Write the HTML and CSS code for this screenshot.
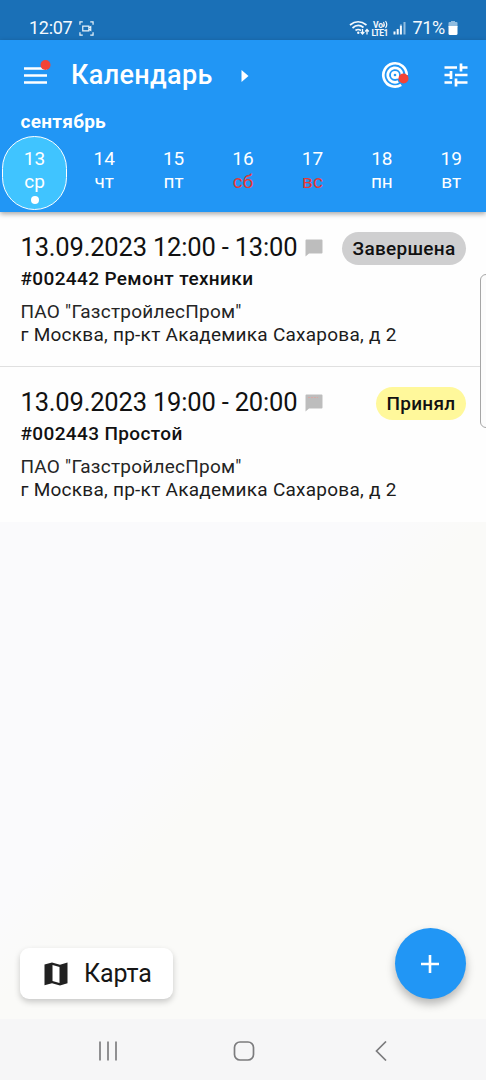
FILE: index.html
```html
<!DOCTYPE html>
<html lang="ru">
<head>
<meta charset="utf-8">
<title>Календарь</title>
<link rel="stylesheet" href="styles.css">
</head>
<body>
<div class="app">
  <div class="status">
    <span class="clock">12:07</span>
    <svg class="rec" width="15" height="15" viewBox="0 0 16 16" fill="none" stroke="#e8f2fa" stroke-width="1.3"><path d="M1 4V1h3M12 1h3v3M15 12v3h-3M4 15H1v-3M4 5.500h6.500v5H4zM10.500 7.500l2-1.500v4l-2-1.500"/></svg>
    <svg class="signals" width="58" height="18" viewBox="0 0 58 18" fill="none" stroke="#f4f9fd" stroke-width="1.700">
      <path d="M1 6Q9 -.5 17.500 6M3.500 9Q9 4 14.500 8.500M6.500 11.500Q9 9.500 12 11.500"/>
      <circle cx="9.300" cy="13.800" r="1.200" fill="#f4f9fd" stroke="none"/>
      <path stroke-width="1.300" d="M13.500 10v5M11.700 13l1.800 2 1.800-2M18 15.500v-5M16.200 12.500l1.800-2 1.800 2"/>
      <path d="M45.500 15.500v-3M48.700 15.500V10M51.900 15.500V7" stroke-width="2"/><path d="M55.500 15.500V3M51.900 7V5.500" stroke="#8fbce0" stroke-width="2"/>
      <path d="M34.500 3q1.500 2.500 0 5M36.500 2q2.500 3.500 0 7" stroke-width="1.200"/>
      <g class="lte"><text x="24" y="8.500" textLength="10">Vo</text><text x="22.500" y="16.500" textLength="17">LTE1</text></g>
    </svg>
    <span class="percent">71%</span>
    <svg class="battery" width="10" height="16" viewBox="0 0 10 16"><path fill="#8fbce0" d="M3 1h4v1h1.500q1 0 1 1v4h-9V3q0-1 1-1H3z"/><path fill="#fff" d="M.5 6h9v7.500q0 1.500-1.500 1.500H2Q.5 15 .5 13.500z"/></svg>
  </div>
  <header class="header">
    <div class="bar">
      <svg class="menu" width="30" height="30" viewBox="0 0 30 30"><path stroke="#fff" stroke-width="2.600" d="M2 9.500h23M2 16.500h23M2 23.500h23"/><circle cx="23.500" cy="6" r="5" fill="#f44336"/></svg>
      <h1 class="title">Календарь</h1>
      <svg class="caret" width="8" height="14" viewBox="0 0 8 14"><path fill="#fff" d="M.5 1 7.500 7 .5 13z"/></svg>
      <svg class="radar" width="28" height="28" viewBox="0 0 28 28" fill="none" stroke="#fff" stroke-width="2.700"><path d="M25.700 14a11.700 11.700 0 1 0-5.500 9.900M21.200 14a7.200 7.200 0 1 0-4 6.500M14 14l4 3"/><circle cx="14" cy="14" r="2.700" fill="#fff"/><circle cx="14" cy="14" r="1.300" fill="#2196f5" stroke="none"/><circle cx="22.500" cy="17.500" r="5" fill="#f44336" stroke="none"/></svg>
      <svg class="tune" width="26" height="26" viewBox="0 0 26 26" stroke="#fff" stroke-width="2.700"><path fill="none" d="M1.500 5.500H14M17 5.500h7.500M18 1.500v8M1.500 13H9M8 9v8M12 13h12.500M1.500 20.500H9M12 20.500h12.500M13 16.500v8"/></svg>
    </div>
    <div class="month">сентябрь</div>
    <div class="days">
      <div class="day selected"><span>13</span><span>ср</span></div>
      <div class="day"><span>14</span><span>чт</span></div>
      <div class="day"><span>15</span><span>пт</span></div>
      <div class="day"><span>16</span><span class="weekend">сб</span></div>
      <div class="day"><span>17</span><span class="weekend">вс</span></div>
      <div class="day"><span>18</span><span>пн</span></div>
      <div class="day"><span>19</span><span>вт</span></div>
    </div>
  </header>
  <main class="list">
    <article class="card">
      <div class="row">
        <span class="time">13.09.2023 12:00 - 13:00</span>
        <svg class="note" width="18" height="18" viewBox="0 0 18 18"><path fill="#bdbdbd" d="M1.500.5h15q1 0 1 1v12q0 1-1 1H4L.5 17.500v-16q0-1 1-1z"/></svg>
        <span class="chip done">Завершена</span>
      </div>
      <div class="job">#002442 Ремонт техники</div>
      <div class="client">ПАО "ГазстройлесПром"</div>
      <div class="address">г Москва, пр-кт Академика Сахарова, д 2</div>
    </article>
    <article class="card">
      <div class="row">
        <span class="time">13.09.2023 19:00 - 20:00</span>
        <svg class="note" width="18" height="18" viewBox="0 0 18 18"><path fill="#bdbdbd" d="M1.500.5h15q1 0 1 1v12q0 1-1 1H4L.5 17.500v-16q0-1 1-1z"/><path stroke="#d8a9a5" stroke-dasharray="2 1" d="M3 3.500h10"/></svg>
        <span class="chip accepted">Принял</span>
      </div>
      <div class="job">#002443 Простой</div>
      <div class="client">ПАО "ГазстройлесПром"</div>
      <div class="address">г Москва, пр-кт Академика Сахарова, д 2</div>
    </article>
  </main>
  <div class="actions">
    <button class="map"><svg width="24" height="24" viewBox="0 0 24 24"><path fill="#212121" fill-rule="evenodd" d="M.5 2.500 8 .5l8 2.200L23.500.5v20.800L16 23.500l-8-2.200-7.500 2zM8.500 3v16l7 2V5z"/></svg><span>Карта</span></button>
    <button class="fab" aria-label="Добавить"><svg width="18" height="18" viewBox="0 0 18 18"><path stroke="#fff" stroke-width="2.600" d="M9 0v18M0 9h18"/></svg></button>
  </div>
  <nav class="nav">
    <svg width="20" height="20" viewBox="0 0 20 20"><path stroke="#858587" stroke-width="1.800" d="M2 .5v19M10 .5v19M18 .5v19"/></svg>
    <svg class="home" width="22" height="20" viewBox="0 0 22 20"><rect x="1.500" y="1" width="19" height="18" rx="5.500" fill="none" stroke="#7c7c7e" stroke-width="1.700"/></svg>
    <svg class="back" width="12" height="20" viewBox="0 0 12 20"><path fill="none" stroke="#7c7c7e" stroke-width="1.700" d="M11 .5 1.500 10l9.500 9.500"/></svg>
  </nav>
  <div class="edge"></div>
</div>
</body>
</html>
```
FILE: styles.css
```css
* { box-sizing: border-box; }
body { margin: 0; font-family: Roboto, sans-serif; color: #111; }
.app {
  position: relative;
  width: 486px;
  height: 1080px;
  display: flex;
  flex-direction: column;
  overflow: hidden;
  background: linear-gradient(135deg, #fafafc 58%, #fafaf8 64%);
}
svg { display: block; flex: none; }
.status {
  flex: none;
  height: 40px;
  padding: 16px 28px 0 29px;
  display: flex;
  align-items: center;
  background: #1a70b7;
  color: #f4f9fd;
  font-size: 18px;
  line-height: 24px;
}
.clock { letter-spacing: -.3px; }
.rec { margin-left: 7px; }
.signals { margin-left: auto; }
.lte { fill: #f4f9fd; stroke: none; font-size: 8.500px; font-weight: 700; }
.percent { margin-left: 5px; letter-spacing: -.3px; }
.battery { margin-left: 3px; }
.header {
  flex: none;
  position: relative;
  height: 172px;
  background: #2196f5;
  color: #fff;
  box-shadow: 0 2px 5px rgba(0, 0, 0, .35);
}
.bar { height: 71px; padding: 0 17px 0 22px; display: flex; align-items: center; }
.menu { margin-top: -3px; }
.title { margin: 0 0 2px 19px; font-size: 27px; font-weight: 500; line-height: 36px; letter-spacing: .35px; }
.caret { margin-left: 28px; }
.radar { margin-left: auto; margin-top: -1px; }
.tune { margin-left: 34px; margin-top: -1px; }
.month { height: 24px; padding-left: 20.500px; font-size: 19px; line-height: 21px; font-weight: 700; letter-spacing: .3px; }
.days { display: grid; grid-template-columns: repeat(7, 1fr); height: 74px; }
.day {
  display: flex;
  flex-direction: column;
  align-items: center;
  padding-top: 12px;
  font-size: 19px;
  line-height: 23px;
}
.selected {
  position: relative;
  width: 65px;
  height: 74px;
  margin: 1px 0 0 2px;
  padding-top: 10px;
  border: 1.500px solid #fff;
  border-radius: 33px;
  background: #40c4ff;
}
.selected::after { content: ""; width: 8px; height: 8px; margin-top: 3px; border-radius: 50%; background: #fff; }
.weekend { color: #e53935; }
.list { background: #fefefe; height: 310px; flex: none; }
.card { height: 154px; padding: 19px 20px 0 20.500px; }
.card + .card { border-top: 1px solid #e0e0e0; height: 156px; }
.row { display: flex; align-items: center; height: 33px; }
.time { font-size: 25.500px; line-height: 32px; margin-top: -2px; letter-spacing: -.18px; }
.note { margin: 0 auto 0 8px; }
.chip { height: 33px; margin-top: 2px; padding: 0 10.500px; border-radius: 17px; font-size: 19px; line-height: 33px; font-weight: 500; letter-spacing: .3px; }
.done { background: #cfcfd0; }
.accepted { background: #fff89b; }
.job { margin-top: 3px; font-size: 19px; line-height: 24px; font-weight: 500; letter-spacing: .37px; }
.client { margin-top: 9px; font-size: 19px; line-height: 23px; color: #252525; letter-spacing: .24px; }
.address { font-size: 19px; line-height: 23px; color: #1c1c1c; letter-spacing: .25px; }
.actions { margin-top: auto; display: flex; justify-content: space-between; align-items: center; padding: 0 20px 20px; }
.map {
  width: 153px;
  height: 51px;
  margin-top: 19px;
  padding: 2px 0 0 24px;
  display: flex;
  align-items: center;
  gap: 16px;
  border: 0;
  border-radius: 9px;
  background: #fff;
  color: #161616;
  font: 25px/32px Roboto, sans-serif;
  letter-spacing: -.1px;
  box-shadow: 0 3px 6px rgba(0, 0, 0, .2);
}
.fab {
  width: 71px;
  height: 71px;
  display: flex;
  align-items: center;
  justify-content: center;
  padding: 0 1px 0 0;
  border: 0;
  border-radius: 50%;
  background: #2196f5;
  box-shadow: 0 5px 10px rgba(0, 0, 0, .28);
}
.nav {
  flex: none;
  height: 61px;
  padding: 3px 99px 0 98px;
  display: flex;
  align-items: center;
  background: #f6f6f7;
}
.home { margin-left: 115px; }
.back { margin-left: auto; }
.edge {
  position: absolute;
  top: 274px;
  right: -8px;
  width: 14px;
  height: 154px;
  border: 1px solid #a6a6a6;
  border-radius: 6px;
  background: #fcfcfc;
}
```
